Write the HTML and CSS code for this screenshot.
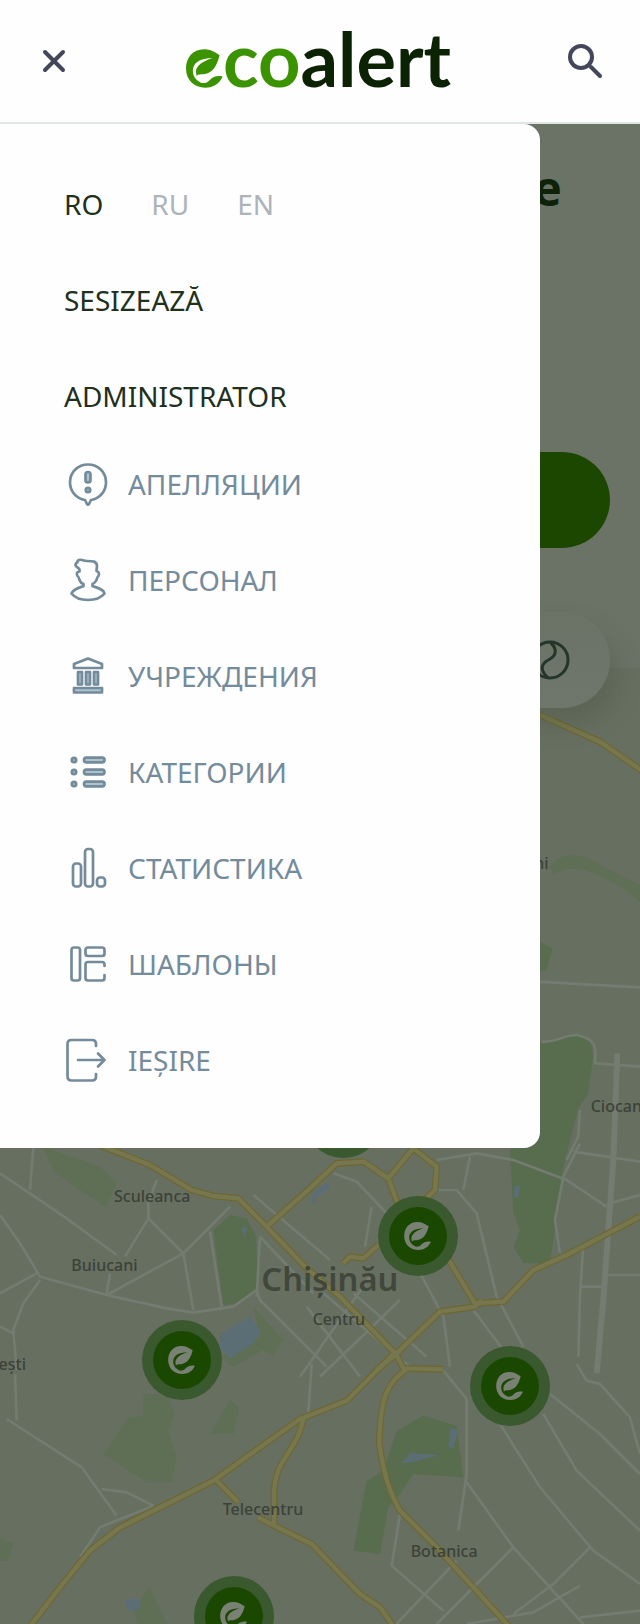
FILE: index.html
```html
<!DOCTYPE html>
<html lang="ro">
<head>
<meta charset="utf-8">
<meta name="viewport" content="width=device-width, initial-scale=1">
<title>ecoalert</title>
<link rel="stylesheet" href="styles.css">
</head>
<body>
<svg class="defs" aria-hidden="true">
  <symbol id="leaf" viewBox="0 0 108 112">
    <path d="M98 17C80 6 70 0 52 0C20 0 0 25 0 56C0 90 25 112 56 112C80 112 98 100 107 79C92 76 80 79 71 88C64 97 54 100 45 98C28 90 20 78 20 62C20 40 40 25 78 25C52 33 28 47 29 66L31 78C37 71 42 74 55 72C80 67 91 45 98 17Z"/>
  </symbol>
  <symbol id="pin" viewBox="0 0 240 240">
    <circle class="pin-halo" cx="120" cy="120" r="120"/>
    <circle class="pin-core" cx="120" cy="120" r="87"/>
    <use class="pin-leaf" href="#leaf" x="78" y="78" width="82" height="84"/>
  </symbol>
</svg>

<header class="topbar">
  <button class="icon-button" type="button" aria-label="Închide meniul">
    <svg class="icon-close" viewBox="0 0 28 28"><path d="M5 5L23 23M23 5L5 23"/></svg>
  </button>
  <a class="brand" href="#" aria-label="ecoalert">
    <svg class="logo" viewBox="0 0 268 64">
      <use class="logo-eco" href="#leaf" x="0" y="20" width="37" height="39"/>
      <text class="logo-text" x="37" y="58"><tspan class="logo-eco">co</tspan><tspan class="logo-alert">alert</tspan></text>
    </svg>
  </a>
  <button class="icon-button" type="button" aria-label="Caută">
    <svg class="icon-search" viewBox="0 0 36 36"><circle cx="13" cy="14" r="11"/><path d="M23 24L32 33"/></svg>
  </button>
</header>

<main class="stage">
  <div class="scene">
    <section class="hero">
      <h1 class="hero-title">e</h1>
      <button class="hero-action" type="button" aria-label="Sesizează"></button>
      <div class="hero-filter">
        <svg class="ball" viewBox="0 0 40 40"><circle cx="20" cy="20" r="18"/><path d="M20 2C27 8 27 15 20 19C10 24 10 30 18 38"/></svg>
      </div>
    </section>
    <section class="map" aria-label="Chișinău">
      <svg class="map-canvas" viewBox="0 2004 1920 2868" preserveAspectRatio="xMinYMin slice">
        <defs>
          <g id="roads">
            <g transform="translate(1500 2100)">
              <path d="M-60 -10L120 45L300 125L430 215"/>
            </g>
            <g transform="translate(0 3330)">
              <path d="M240 80L330 118L450 165L575 240L640 258L715 265L800 350L920 475L1020 560L1190 735"/>
              <path d="M800 350L930 235L1010 160L1090 155L1165 205L1240 115L1310 170L1305 240L1210 330"/>
              <path d="M1165 205L1200 300M1340 440L1425 580L1510 575L1600 480L1700 435L1920 320"/>
              <path d="M1425 590L1320 605L1180 740L1130 780M1425 590L1445 570"/>
              <path d="M1135 405L1090 445L1050 440L1030 460M1190 735L1210 775L1330 778"/>
            </g>
            <g transform="translate(0 4092)">
              <path d="M80 800L180 670L270 560L360 490L500 420L640 350L780 250L900 165L1040 110L1130 20L1180 -30"/>
              <path d="M910 165C890 270 820 280 822 400L822 485"/>
              <path d="M650 350L715 415M775 460L822 485L935 540L1080 690L1140 730L1190 800"/>
              <path d="M1220 15C1170 55 1140 80 1138 240C1150 330 1170 390 1200 440L1310 550L1530 790"/>
            </g>
          </g>
        </defs>
        <g class="park">
          <g transform="translate(1500 2100)">
            <path d="M120 725L158 745L140 810L120 812ZM110 1025C150 1030 190 1000 225 1004C265 1008 280 1025 278 1080L265 1180L235 1225L190 1400L170 1550L150 1690L70 1690L40 1640L60 1590L40 1540L30 1350L110 1240Z"/>
            <path class="park-faint" d="M150 500C190 450 240 455 310 500L420 555V605L370 565C300 525 230 480 160 525Z"/>
          </g>
          <g transform="translate(0 3330)">
            <path d="M640 360L690 315L740 325L768 380L775 540L720 580L670 585Z"/>
            <path class="park-faint" d="M130 110L300 170L350 220L320 290L240 240L160 185ZM760 590L850 690L820 740L790 720L700 770L660 740L780 680Z"/>
          </g>
          <g transform="translate(0 4092)">
            <path class="park-faint" d="M430 90L500 90L525 150L505 200L530 280L515 355L440 355L310 270L385 160L430 155ZM690 105L718 135L700 210L630 210ZM0 520L40 540L25 590H0ZM400 740L448 665L510 800H420Z"/>
            <path d="M1190 200L1270 155L1370 185L1390 340L1240 330L1200 390L1165 430L1140 570L1060 560L1100 350L1150 320Z"/>
          </g>
        </g>
        <g class="water" transform="translate(0 3330)">
          <path d="M665 670L750 620L782 665L760 700L690 745L655 710ZM930 275L945 240L990 215L990 235L950 260L940 285ZM722 355L742 348L735 380ZM1543 230L1560 225L1555 262L1542 260Z"/>
          <path d="M1350 955L1375 960L1360 1015L1345 1010ZM1205 1060L1230 1030L1320 1035L1240 1055ZM375 1470L420 1465V1495L385 1505Z"/>
        </g>
        <g class="streets">
          <g transform="translate(1500 2100)">
            <path d="M110 845L420 862M125 1025C170 1028 190 1005 230 1005C300 1020 285 1050 285 1090L420 1100M240 1230L235 1310L200 1380"/>
            <path class="avenue" d="M352 1060L340 1380L310 1800L290 2020"/>
          </g>
          <g transform="translate(0 3330)">
            <path d="M0 190L200 325L350 435M100 110L90 240M0 315L60 400L120 500L320 555L500 595L580 608L700 590L770 540L780 570L980 770M0 550L110 490M120 510L70 580L40 660L50 780M0 650L40 670"/>
            <path d="M470 210L445 280V325L550 430L580 600M445 325L375 440M320 555L550 430L690 290M630 365L665 590M330 490L320 550"/>
            <path d="M780 380L940 550M760 255L990 450M920 590L1080 800M1200 570L960 800M1110 500L900 800M780 380L770 560"/>
            <path d="M1000 190L1070 215L1160 310M1115 290L1095 410M1250 470L1330 620L1350 770M1300 240L1370 240L1430 310L1490 560L1570 710"/>
            <path d="M1310 150L1430 130L1540 150L1700 210L1820 290M1410 140L1390 240M1740 100L1690 200L1665 330L1680 430M1735 740L1740 560L1750 400M1720 125L1920 155M1740 530H1810M1820 495H1920M1830 280L1920 255"/>
            <path d="M970 550L1240 780M1060 550L1280 740M1420 600L1510 720"/>
          </g>
          <g transform="translate(0 4092)">
            <path d="M45 30L50 170M20 165L245 310L350 455M305 375L380 385L460 425M460 425L300 490L240 580M935 0L925 145"/>
            <path d="M1330 20L1400 105L1400 330L1375 500M1200 450L1175 605L1330 740M1500 180L1620 370L1780 560L1920 660M1630 150L1730 320L1920 500M1650 90L1800 210L1920 330M1730 0L1760 50L1800 60L1890 160L1920 270"/>
            <path d="M1400 355L1540 550L1750 780M1540 550L1310 780M1370 590L1180 790M1540 750L1660 660L1770 550M1740 665L1600 745L1400 780M1740 760L1920 740"/>
          </g>
        </g>
        <use class="road-casing" href="#roads"/>
        <use class="road-fill" href="#roads"/>
        <g class="place">
          <text x="1646" y="2607" text-anchor="end">ni</text>
          <text x="1772" y="3335">Ciocan</text>
          <text x="342" y="3605">Sculeanca</text>
          <text x="214" y="3813">Buiucani</text>
          <text class="city" x="784" y="3872">Chișinău</text>
          <text x="938" y="3975">Centru</text>
          <text x="78" y="4110" text-anchor="end">ești</text>
          <text x="668" y="4544">Telecentru</text>
          <text x="1232" y="4670">Botanica</text>
        </g>
        <use href="#pin" x="910" y="3234" width="240" height="240"/>
        <use href="#pin" x="1134" y="3588" width="240" height="240"/>
        <use href="#pin" x="426" y="3960" width="240" height="240"/>
        <use href="#pin" x="1410" y="4038" width="240" height="240"/>
        <use href="#pin" x="582" y="4728" width="240" height="240"/>
      </svg>
    </section>
  </div>

  <aside class="drawer">
    <nav class="languages" aria-label="Limba">
      <a class="current" href="#ro">RO</a>
      <a href="#ru">RU</a>
      <a href="#en">EN</a>
    </nav>
    <a class="main-link" href="#report">SESIZEAZĂ</a>
    <a class="main-link" href="#admin">ADMINISTRATOR</a>
    <nav class="menu" aria-label="Administrator">
      <a href="#appeals"><svg viewBox="0 0 48 48"><path d="M21 40C12 38.500 6 31 6 22.500C6 12 14 4.500 24 4.500S42 12 42 22.500C42 31 36 38.500 27 40L25 44Q24 45.500 23 44Z"/><rect class="tint" x="21.500" y="12" width="5" height="10.500" rx="2.500"/><circle class="tint" cx="24" cy="30" r="2.200"/></svg>АПЕЛЛЯЦИИ</a>
      <a href="#staff"><svg viewBox="0 0 48 48"><path d="M15 4C18 3 19 5 23 5L30 5.500Q33 7 33 10L32.500 15Q36 16 34.500 20Q33 21 32.500 24Q31 27 28.500 28V30C31 31.500 39 32 40.500 37.500C37 42 31 44 24 44S11 42 7.500 37.500C10 32 17 31.500 19.500 30V28Q16.500 27 15.500 24Q15 21 13.500 20Q11.500 16 15.500 15.500V13.500C14.500 11 12 12 11.500 9Q11.500 7 13.500 6.500Q13 5 15 4Z"/></svg>ПЕРСОНАЛ</a>
      <a href="#institutions"><svg viewBox="0 0 48 48"><path d="M24 6.500L38 12V16H10V12Z"/><g class="tint"><rect x="14" y="20" width="4" height="12.500"/><rect x="22" y="20" width="4" height="12.500"/><rect x="30" y="20" width="4" height="12.500"/><rect x="10" y="36" width="28" height="4.500"/></g></svg>УЧРЕЖДЕНИЯ</a>
      <a href="#categories"><svg viewBox="0 0 48 48"><g class="tint"><circle cx="10" cy="12" r="2.200"/><circle cx="10" cy="24" r="2.200"/><circle cx="10" cy="36" r="2.200"/><rect x="20" y="9.700" width="20.500" height="4.600" rx="2.300"/><rect x="20" y="21.700" width="20.500" height="4.600" rx="2.300"/><rect x="20" y="33.700" width="20.500" height="4.600" rx="2.300"/></g></svg>КАТЕГОРИИ</a>
      <a href="#statistics"><svg viewBox="0 0 48 48"><rect x="9" y="19.500" width="8" height="23" rx="3"/><rect x="21" y="5" width="8" height="37.500" rx="3"/><rect x="33" y="33.500" width="8" height="9" rx="3"/></svg>СТАТИСТИКА</a>
      <a href="#templates"><svg viewBox="0 0 48 48"><rect x="7.500" y="7.500" width="8.500" height="33" rx="2.500"/><rect x="21.500" y="7.500" width="19" height="8.500" rx="2.500"/><path d="M40.500 26V24.500Q40.500 22 38 22H24Q21.500 22 21.500 24.500V38Q21.500 40.500 24 40.500H38Q40.500 40.500 40.500 38V35"/></svg>ШАБЛОНЫ</a>
      <a href="#logout"><svg viewBox="0 0 48 48"><path d="M32 10V8Q32 4 28 4H7.500Q3.500 4 3.500 8V40Q3.500 44.500 7.500 44.500H28Q32 44.500 32 40.500V38M14 24H40M34 17.500L40.500 24L34 30.500"/></svg>IEȘIRE</a>
    </nav>
  </aside>
</main>
</body>
</html>
```
FILE: styles.css
```css
* {
  box-sizing: border-box;
}

body {
  margin: 0;
  min-height: 100vh;
  display: flex;
  flex-direction: column;
  background: #fefefe;
  font-family: "Noto Sans", "Open Sans", sans-serif;
}

a {
  color: inherit;
  text-decoration: none;
}

button {
  padding: 0;
  border: 0;
  background: none;
  cursor: pointer;
}

.defs {
  position: absolute;
  width: 0;
  height: 0;
}

/* Top bar */

.topbar {
  display: flex;
  align-items: center;
  justify-content: space-between;
  height: 124px;
  padding: 0 36px;
  border-bottom: 2px solid #dfe6e4;
}

.icon-button {
  display: flex;
  width: 36px;
  height: 36px;
  align-items: center;
  justify-content: center;
}

.icon-close,
.icon-search {
  fill: none;
  stroke: #44475a;
  stroke-linecap: round;
}

.icon-close {
  width: 28px;
  stroke-width: 4;
}

.icon-search {
  width: 36px;
  stroke-width: 4;
}

.brand,
.logo {
  display: block;
}

.logo {
  width: 268px;
  height: 64px;
  overflow: visible;
}

.logo-text {
  font-family: Lato, sans-serif;
  font-size: 74px;
  font-weight: 700;
}

.logo-eco {
  fill: #3b9300;
}

.logo-alert {
  fill: #0b2203;
}

/* Dimmed page under the drawer */

.stage {
  flex: 1;
  display: grid;
}

.scene,
.drawer {
  grid-area: 1 / 1;
}

.scene {
  display: flex;
  flex-direction: column;
  background: #6b7367;
}

.hero {
  display: flex;
  flex-direction: column;
  padding: 36px 30px 0;
}

.hero-title {
  margin: 0 0 236px;
  padding-right: 48px;
  color: #0d2208;
  font-size: 48px;
  line-height: 56px;
  text-align: right;
}

.hero-action {
  height: 96px;
  border-radius: 48px;
  background: #1c4700;
}

.hero-filter {
  position: relative;
  z-index: 1;
  display: flex;
  align-items: center;
  justify-content: flex-end;
  height: 96px;
  margin: 64px 0 -40px;
  padding-right: 40px;
  border-radius: 48px;
  background: linear-gradient(#6b7367, #6f776c);
  box-shadow: 8px 16px 24px rgba(70, 76, 60, 0.3);
}

.ball {
  width: 40px;
  fill: none;
  stroke: #26352b;
  stroke-width: 3;
}

.map {
  position: relative;
  flex: 1;
  overflow: hidden;
  background: #676f61;
}

.map-canvas {
  position: absolute;
  inset: 0;
  width: 100%;
  height: 100%;
}

.park {
  fill: #586d4e;
}

.park-faint {
  fill: #5f6f56;
}

.water {
  fill: #5c6e75;
}

.streets {
  fill: none;
  stroke: #747b70;
  stroke-width: 8;
}

.avenue {
  stroke-width: 18;
}

.road-casing,
.road-fill {
  fill: none;
  stroke-linejoin: round;
}

.road-casing {
  stroke: #6f6730;
  stroke-width: 20;
}

.road-fill {
  stroke: #76774e;
  stroke-width: 13;
}

.place {
  fill: #3c4238;
  font-size: 48px;
  font-weight: 500;
}

.city {
  fill: #41473b;
  font-size: 98px;
  font-weight: 600;
}

.pin-halo {
  fill: #3a592f;
}

.pin-core {
  fill: #1b4800;
}

.pin-leaf {
  fill: #798175;
}

/* Drawer */

.drawer {
  position: relative;
  z-index: 2;
  align-self: start;
  display: flex;
  flex-direction: column;
  gap: 56px;
  margin-right: 100px;
  padding: 60px 64px 64px;
  border-radius: 0 16px 16px 0;
  background: #fefefe;
  color: #21301c;
  font-size: 28px;
  line-height: 40px;
}

.languages {
  display: flex;
  gap: 48px;
  color: #acb3b9;
}

.languages .current {
  color: #21301c;
}

.menu {
  display: flex;
  flex-direction: column;
  gap: 48px;
  margin-top: -12px;
  color: #748b9b;
}

.menu a {
  display: flex;
  align-items: center;
  gap: 16px;
}

.menu svg {
  flex: none;
  width: 48px;
  height: 48px;
  fill: none;
  stroke: currentColor;
  stroke-width: 2.7;
  stroke-linecap: round;
  stroke-linejoin: round;
}

.menu .tint {
  fill: #adc3cd;
}
```
